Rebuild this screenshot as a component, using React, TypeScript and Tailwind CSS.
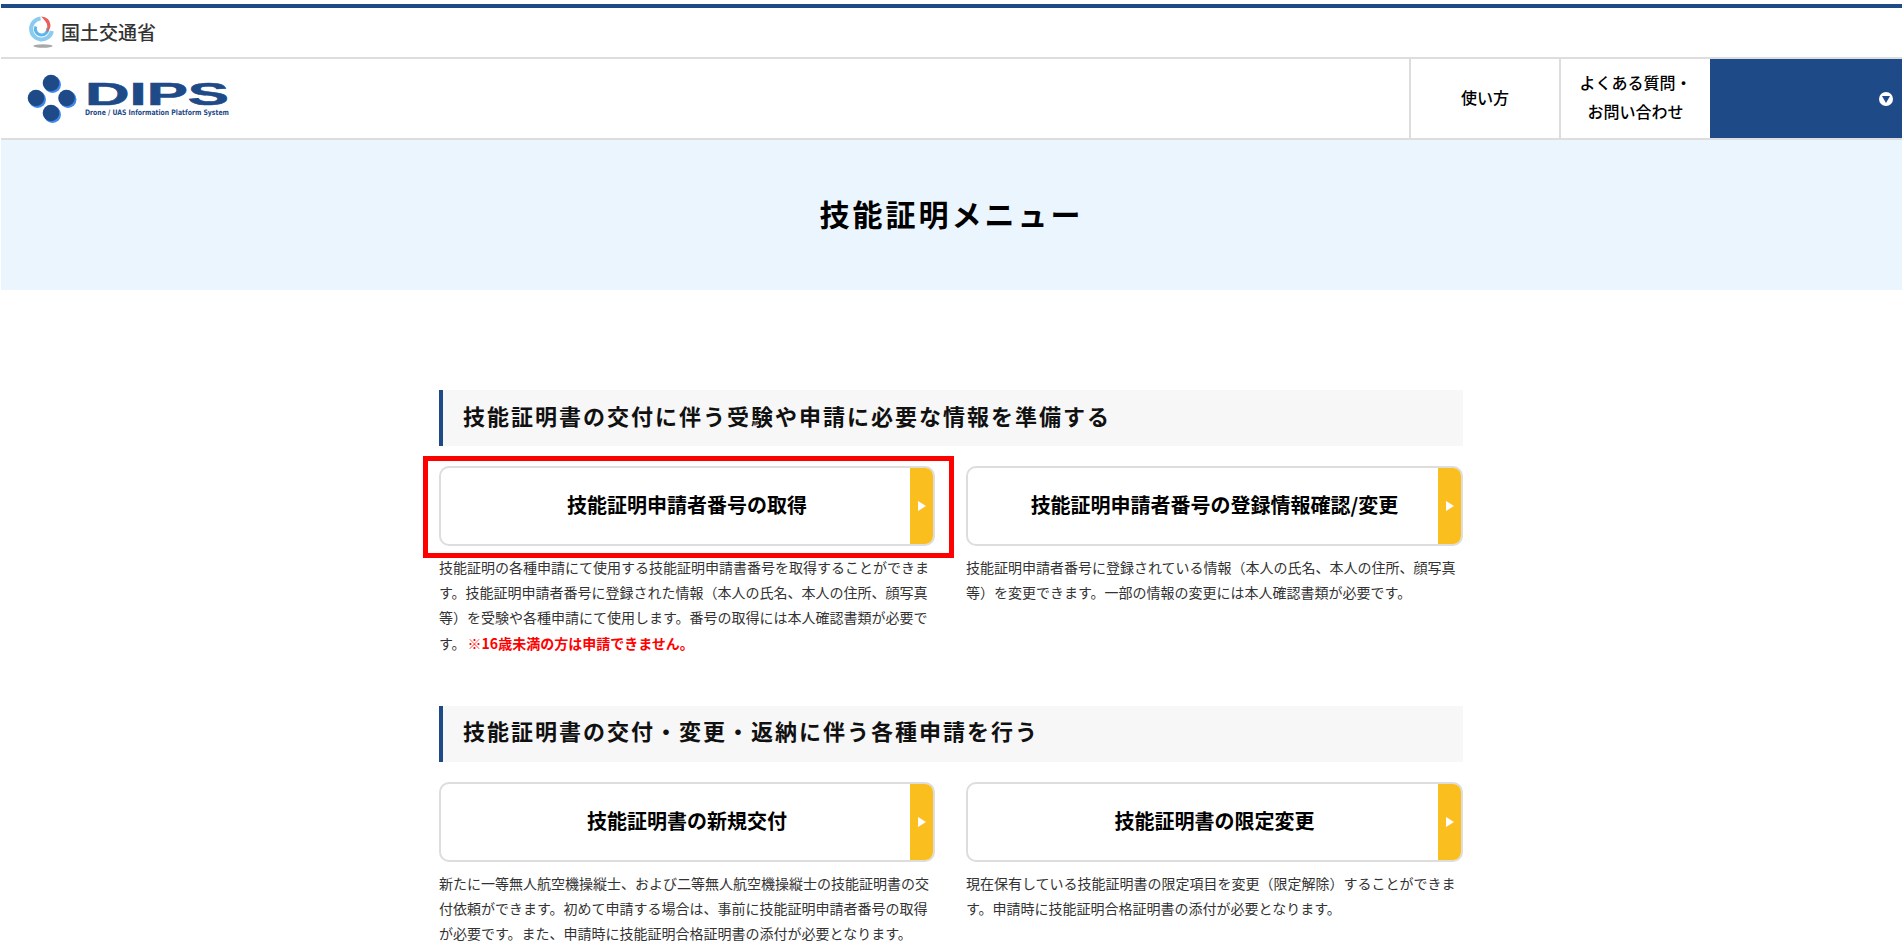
const font = "font-['Noto_Sans_CJK_JP','Noto_Sans_CJK_SC',sans-serif]";

function Triangle() {
  return <span className="ml-[1px] block h-0 w-0 border-y-[5px] border-l-[8px] border-y-transparent border-l-white" />;
}

function Card({ title, children, red }: { title: string; children: React.ReactNode; red?: boolean }) {
  return (
    <div className="relative">
      {red && <div className="absolute left-[-16px] top-[-10px] h-[102px] w-[531px] border-[5px] border-[#ff0000]" />}
      <div className="flex h-[80px] overflow-hidden rounded-[10px] border-2 border-[#dddddd] bg-white">
        <div className="flex flex-1 items-center justify-center pb-[2px] pl-[23px] text-[20px] font-bold text-black">{title}</div>
        <div className="flex w-[23px] items-center justify-center bg-[#fabe1e]">
          <Triangle />
        </div>
      </div>
      <p className="mt-[9px] text-[14px] leading-[25.2px] text-[#333333]">{children}</p>
    </div>
  );
}

function SectionHeading({ children }: { children: React.ReactNode }) {
  return (
    <h2 className="flex h-[56px] items-center border-l-[4px] border-[#1f4a88] bg-[#f7f7f7] pb-[6px] pl-[20px] text-[22px] font-bold tracking-[2px] text-[#111111]">
      {children}
    </h2>
  );
}

function MlitLogo() {
  return (
    <svg width="35" height="41" viewBox="0 0 35 41" className="shrink-0">
      <path d="M14.6 6.5 A10.5 10.5 0 1 0 25.9 19" stroke="#8ccbf0" strokeWidth="4" fill="none" />
      <path d="M9.8 14.5 A6.2 6.2 0 1 0 21.6 15.7" stroke="#5fb5ea" strokeWidth="3" fill="none" />
      <path d="M15 4.5 Q24 5 24.5 13 Q24.5 18 20.5 20.5 Q22.5 13 19.5 9.5 Q17.5 7 15 4.5Z" fill="#e9605a" />
      <ellipse cx="17" cy="34" rx="9.5" ry="1.7" fill="#a8a8a8" />
    </svg>
  );
}

function DipsLogo() {
  return (
    <svg width="210" height="50" viewBox="0 0 210 50" className="shrink-0">
      <g fill="#3f88ea">
        <circle cx="29.5" cy="10.5" r="8.5" />
        <circle cx="14.5" cy="25.5" r="8.5" />
        <circle cx="45" cy="25.5" r="8.5" />
        <circle cx="29.5" cy="40.5" r="8.5" />
      </g>
      <g fill="#1f4a88">
        <circle cx="28" cy="9" r="8.3" />
        <circle cx="13" cy="24" r="8.3" />
        <circle cx="43.5" cy="24" r="8.3" />
        <circle cx="28" cy="39" r="8.3" />
      </g>
      <text
        x="62"
        y="31"
        textLength="144"
        lengthAdjust="spacingAndGlyphs"
        fontSize="32"
        fontWeight="700"
        fill="#1f4a88"
        stroke="#1f4a88"
        strokeWidth="0.6"
        fontFamily="'Liberation Sans', sans-serif"
      >
        DIPS
      </text>
      <text
        x="62"
        y="41"
        textLength="144"
        lengthAdjust="spacingAndGlyphs"
        fontSize="7.5"
        fontWeight="700"
        fill="#1f4a88"
        fontFamily="'DejaVu Sans', sans-serif"
      >
        Drone / UAS Information Platform System
      </text>
    </svg>
  );
}

export default function App() {
  return (
    <div className={`h-[949px] overflow-hidden bg-white pl-px pt-[4px] ${font}`}>
      <div className="h-[4px] bg-[#1f4a88]" />
      <div className="flex h-[51px] items-center border-b-2 border-[#dddddd] pl-[25px]">
        <MlitLogo />
        <span className="text-[19px] font-medium text-[#333333]">国土交通省</span>
      </div>
      <header className="flex h-[81px] border-b-2 border-[#dddddd]">
        <div className="flex flex-1 items-center pl-[22px]">
          <DipsLogo />
        </div>
        <nav className="flex text-[16px] font-medium text-black">
          <a className="flex w-[150px] items-center justify-center border-l-2 border-[#dddddd] pb-[3px]">使い方</a>
          <a className="flex w-[151px] items-center justify-center border-l-2 border-[#dddddd] pb-[4px] text-center leading-[29px]">
            よくある質問・
            <br />
            お問い合わせ
          </a>
          <div className="flex w-[192px] items-center justify-end bg-[#1f4a88] pr-[9px]">
            <span className="flex h-[14px] w-[14px] items-center justify-center rounded-full bg-white">
              <span className="mt-[1px] block h-0 w-0 border-x-[4.5px] border-t-[7px] border-x-transparent border-t-[#1f4a88]" />
            </span>
          </div>
        </nav>
      </header>
      <div className="flex h-[150px] items-center justify-center bg-[#ebf5fd] pb-[3px] text-[30px] font-bold tracking-[3px] text-black">
        技能証明メニュー
      </div>
      <main className="ml-[438px] w-[1024px] pt-[100px]">
        <SectionHeading>技能証明書の交付に伴う受験や申請に必要な情報を準備する</SectionHeading>
        <div className="mt-[20px] grid grid-cols-[496px_497px] gap-x-[31px]">
          <Card title="技能証明申請者番号の取得" red>
            技能証明の各種申請にて使用する技能証明申請書番号を取得することができます。技能証明申請者番号に登録された情報（本人の氏名、本人の住所、顔写真等）を受験や各種申請にて使用します。番号の取得には本人確認書類が必要です。
            <strong className="ml-[2px] font-bold text-[#ff0000]">※16歳未満の方は申請できません。</strong>
          </Card>
          <Card title="技能証明申請者番号の登録情報確認/変更">
            技能証明申請者番号に登録されている情報（本人の氏名、本人の住所、顔写真等）を変更できます。一部の情報の変更には本人確認書類が必要です。
          </Card>
        </div>
        <div className="mt-[50px]">
          <SectionHeading>技能証明書の交付・変更・返納に伴う各種申請を行う</SectionHeading>
        </div>
        <div className="mt-[20px] grid grid-cols-[496px_497px] gap-x-[31px]">
          <Card title="技能証明書の新規交付">
            新たに一等無人航空機操縦士、および二等無人航空機操縦士の技能証明書の交付依頼ができます。初めて申請する場合は、事前に技能証明申請者番号の取得が必要です。また、申請時に技能証明合格証明書の添付が必要となります。
          </Card>
          <Card title="技能証明書の限定変更">
            現在保有している技能証明書の限定項目を変更（限定解除）することができます。申請時に技能証明合格証明書の添付が必要となります。
          </Card>
        </div>
      </main>
    </div>
  );
}
